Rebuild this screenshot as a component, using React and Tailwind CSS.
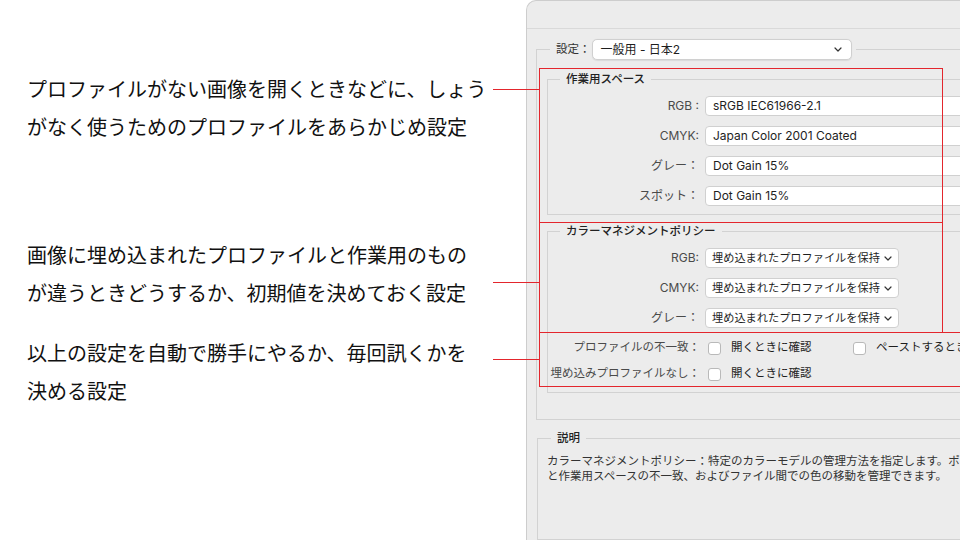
import React from "react";

const jp = { fontFamily: '"Noto Sans CJK JP", sans-serif' };
const ui = { fontFamily: 'Inter, "Noto Sans CJK JP", sans-serif' };

const notes = [
  { lines: ["プロファイルがない画像を開くときなどに、しょう", "がなく使うためのプロファイルをあらかじめ設定"], mt: "mt-[70px]" },
  { lines: ["画像に埋め込まれたプロファイルと作業用のもの", "が違うときどうするか、初期値を決めておく設定"], mt: "mt-[90px]" },
  { lines: ["以上の設定を自動で勝手にやるか、毎回訊くかを", "決める設定"], mt: "mt-[22px]" },
];

const spaces = [
  ["RGB :", "sRGB IEC61966-2.1"],
  ["CMYK:", "Japan Color 2001 Coated"],
  ["グレー：", "Dot Gain 15%"],
  ["スポット：", "Dot Gain 15%"],
];

const policies = [
  ["RGB:", "埋め込まれたプロファイルを保持"],
  ["CMYK:", "埋め込まれたプロファイルを保持"],
  ["グレー：", "埋め込まれたプロファイルを保持"],
];

function Chevron() {
  return (
    <svg width="8" height="5" viewBox="0 0 8 5" className="shrink-0">
      <polyline points="1,1 4,4 7,1" fill="none" stroke="#333" strokeWidth="1.2" strokeLinecap="round" strokeLinejoin="round" />
    </svg>
  );
}

function Checkbox() {
  return <span className="h-[13px] w-[13px] shrink-0 rounded-[3px] border border-[#b9b9b9] bg-white" />;
}

function Legend({ children }) {
  return (
    <legend className="ml-[12px] px-[6px] text-[11.5px] leading-[16px] font-medium text-[#222]">
      {children}
    </legend>
  );
}

export default function App() {
  return (
    <div className="relative flex h-[540px] w-[960px] overflow-hidden bg-white">
      {/* notes on the left */}
      <div className="w-[526px] shrink-0 pl-[27px] text-[20px] leading-[38px] text-[#111]" style={jp}>
        {notes.map((n, i) => (
          <div key={i} className={n.mt}>
            {n.lines.map((l) => (
              <div key={l} className="whitespace-nowrap">{l}</div>
            ))}
          </div>
        ))}
      </div>

      {/* color settings dialog */}
      <div
        className="flex w-[434px] shrink-0 flex-col overflow-hidden rounded-tl-[10px] border-l border-t border-[#cdcdcd] bg-[#ececec] text-[#1e1e1e]"
        style={ui}
      >
        <div className="h-[28px] shrink-0 border-b border-[#d9d9d9]" />

        <fieldset className="ml-[9px] mt-[10px] w-[520px] shrink-0 border border-[#d2d2d2] pb-[26px] pl-[10px]">
          <legend className="ml-[3px] pl-[6px] pr-[4px]">
            <div className="flex items-center">
              <span className="text-[11.5px] text-[#333]">設定：</span>
              <div className="ml-[1px] flex h-[21px] w-[260px] items-center justify-between rounded-[5px] border border-[#d0d0d0] bg-white pl-[8px] pr-[9px] text-[12px] shadow-[0_0.5px_1px_rgba(0,0,0,0.08)]">
                <span>一般用 - 日本2</span>
                <Chevron />
              </div>
            </div>
          </legend>

          <fieldset className="mt-[11px] border border-[#d2d2d2] pb-[8px] pt-[9px]">
            <Legend>作業用スペース</Legend>
            <div className="flex flex-col gap-[10px]">
              {spaces.map(([label, value]) => (
                <div key={label} className="flex items-center">
                  <span className="w-[152px] shrink-0 pr-[1px] text-right text-[12px] text-[#4a4a4a]">{label}</span>
                  <div className="ml-[5px] flex h-[20px] w-[320px] items-center rounded-[4px] border border-[#d0d0d0] bg-white pl-[7px] text-[12px]">
                    {value}
                  </div>
                </div>
              ))}
            </div>
          </fieldset>

          <fieldset className="mt-[8px] border border-[#d2d2d2] pb-[8px] pt-[9px]">
            <Legend>カラーマネジメントポリシー</Legend>
            <div className="flex flex-col gap-[10px]">
              {policies.map(([label, value]) => (
                <div key={label} className="flex items-center">
                  <span className="w-[152px] shrink-0 pr-[1px] text-right text-[12px] text-[#4a4a4a]">{label}</span>
                  <div className="ml-[5px] flex h-[20px] w-[194px] items-center justify-between gap-[4px] whitespace-nowrap rounded-[4px] border border-[#d0d0d0] bg-white pl-[6px] pr-[6px] text-[11.2px]">
                    <span>{value}</span>
                    <Chevron />
                  </div>
                </div>
              ))}
              <div className="flex flex-col gap-[6px] text-[11.5px]">
                <div className="flex h-[20px] items-center">
                  <span className="w-[152px] shrink-0 text-right text-[#4a4a4a]">プロファイルの不一致：</span>
                  <div className="ml-[8px] flex w-[145px] items-center gap-[10px]">
                    <Checkbox />
                    <span>開くときに確認</span>
                  </div>
                  <div className="flex items-center gap-[10px]">
                    <Checkbox />
                    <span className="whitespace-nowrap">ペーストするとき</span>
                  </div>
                </div>
                <div className="flex h-[20px] items-center">
                  <span className="w-[152px] shrink-0 whitespace-nowrap text-right text-[#4a4a4a]">埋め込みプロファイルなし：</span>
                  <div className="ml-[8px] flex items-center gap-[10px]">
                    <Checkbox />
                    <span>開くときに確認</span>
                  </div>
                </div>
              </div>
            </div>
          </fieldset>
        </fieldset>

        <fieldset className="ml-[10px] mt-[10px] w-[520px] flex-1 border border-[#d2d2d2] pl-[9px] pt-[8px]">
          <legend className="ml-[4px] px-[6px] text-[11.5px] leading-[16px] font-medium text-[#222]">説明</legend>
          <div className="text-[11.5px] leading-[14.5px] text-[#333]">
            <div className="whitespace-nowrap">
              カラーマネジメントポリシー：特定のカラーモデルの管理方法を指定します。ポリシーでは、カラープロファイルの読み込みと埋め込み、埋め込まれたカラープロファイル
            </div>
            <div className="whitespace-nowrap">
              と作業用スペースの不一致、およびファイル間での色の移動を管理できます。
            </div>
          </div>
        </fieldset>
      </div>

      {/* red annotation boxes and leader lines */}
      <div className="pointer-events-none absolute left-[539px] top-[68px] h-[155px] w-[404px] border border-[#e3262d]" />
      <div className="pointer-events-none absolute left-[539px] top-[222px] h-[111px] w-[404px] border border-[#e3262d]" />
      <div className="pointer-events-none absolute left-[539px] top-[332px] h-[55px] w-[440px] border border-[#e3262d]" />
      <div className="pointer-events-none absolute left-[493px] top-[89px] h-px w-[46px] bg-[#e3262d]" />
      <div className="pointer-events-none absolute left-[493px] top-[282px] h-px w-[46px] bg-[#e3262d]" />
      <div className="pointer-events-none absolute left-[493px] top-[359px] h-px w-[46px] bg-[#e3262d]" />
    </div>
  );
}
